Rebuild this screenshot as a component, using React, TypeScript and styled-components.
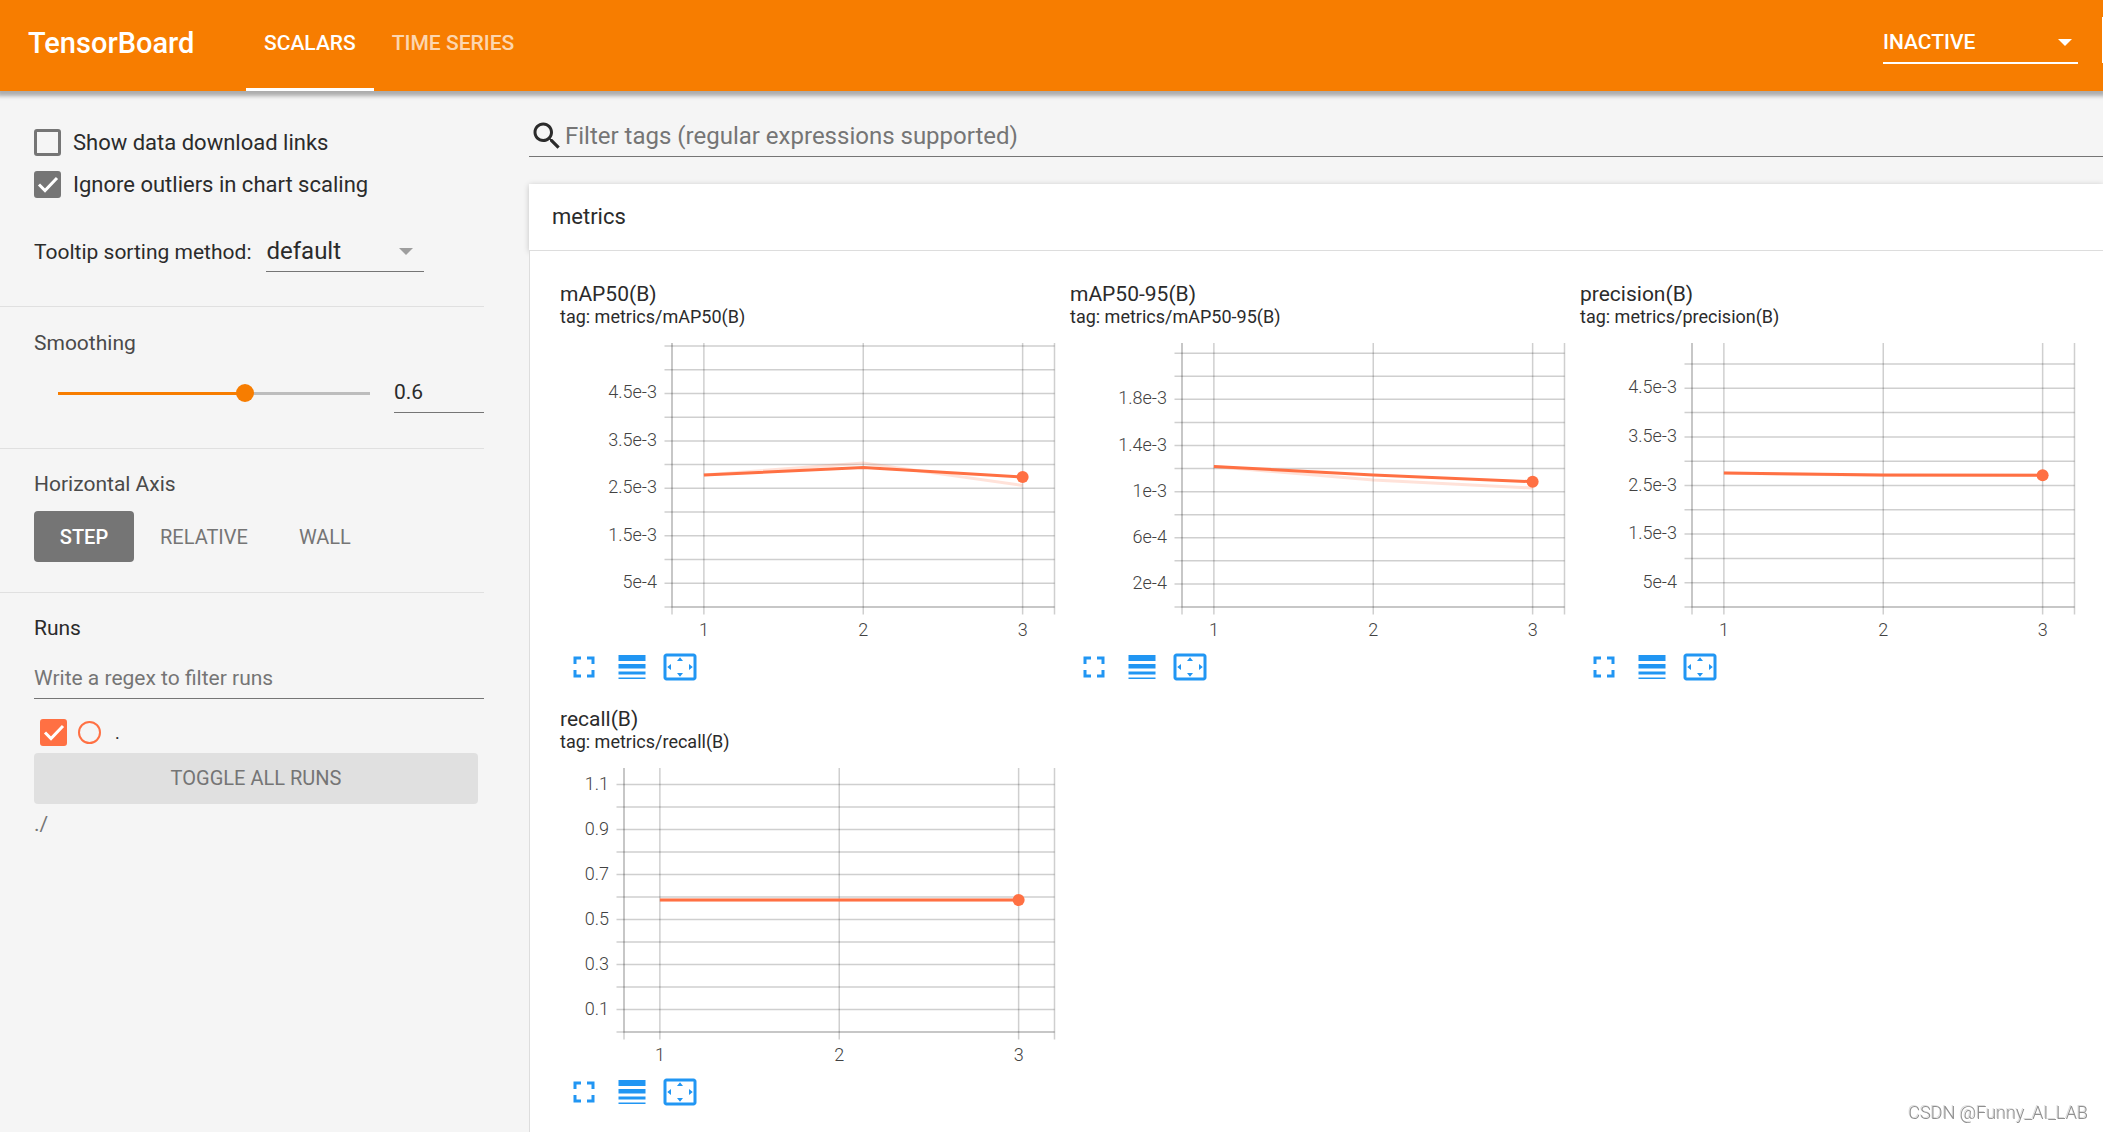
import React, { useState } from "react";
import styled, { createGlobalStyle } from "styled-components";

const GlobalStyle = createGlobalStyle`
  *, *::before, *::after { box-sizing: border-box; }
  body { margin: 0; background: #f5f5f5; }
  body, button, input, select { font-family: Roboto, "Noto Sans", sans-serif; }
`;

const orange = "#f77d00";
const grey = "#757575";
const ink = "#2b2b2b";
const runColor = "#ff7043";

const Page = styled.div`
  display: flex;
  flex-direction: column;
  min-height: 100vh;
  color: ${ink};
`;

const Header = styled.header`
  display: flex;
  align-items: center;
  height: 91px;
  padding-left: 28px;
  overflow: hidden;
  background: ${orange};
  color: #fff;
  box-shadow: 0 2px 4px 3px rgba(0, 0, 0, 0.3);
  z-index: 2;
`;

const Brand = styled.h1`
  width: 218px;
  margin: 0;
  padding-bottom: 5px;
  font-size: 29px;
  line-height: 36px;
  font-weight: 500;
`;

const Tabs = styled.nav`
  display: flex;
  align-self: stretch;
`;

const Tab = styled.button<{ $active?: boolean }>`
  padding: 0 18px 3px;
  border: 0;
  border-bottom: 3px solid ${(p) => (p.$active ? "#fff" : "transparent")};
  background: none;
  color: ${(p) => (p.$active ? "#fff" : "rgba(255, 255, 255, 0.7)")};
  font-size: 21px;
  font-weight: 500;
`;

const HeaderTools = styled.div`
  display: flex;
  align-items: center;
  gap: 24px;
  height: 46px;
  margin: 0 -45px 11px auto;
`;

const SelectBox = styled.div`
  position: relative;
  display: flex;
`;

const StatusSelect = styled.select`
  appearance: none;
  width: 195px;
  height: 47px;
  padding: 5px 24px 0 0;
  border: 0;
  border-bottom: 2px solid #fff;
  border-radius: 0;
  background: none;
  color: #fff;
  font-size: 21px;
  font-weight: 500;
`;

const ReloadButton = styled.button`
  width: 46px;
  height: 46px;
  border: 1px solid #fff;
  background: none;
`;

const Caret = styled.span<{ $light?: boolean }>`
  position: absolute;
  top: ${(p) => (p.$light ? "22px" : "12px")};
  right: ${(p) => (p.$light ? "6px" : "11px")};
  border: 7px solid transparent;
  border-top-color: ${(p) => (p.$light ? "#fff" : "#9e9e9e")};
  border-bottom: 0;
  pointer-events: none;
`;

const Body = styled.div`
  display: flex;
  flex: 1;
`;

const Sidebar = styled.aside`
  flex: 0 0 484px;
  margin-right: 45px;
`;

const Section = styled.section<{ $top: number; $bottom: number }>`
  display: flex;
  flex-direction: column;
  padding: ${(p) => p.$top}px 0 ${(p) => p.$bottom}px 34px;
  border-bottom: 1px solid #e0e0e0;
  &:last-child { border-bottom: 0; }
`;

const SectionTitle = styled.h2<{ $gap: number; $strong?: boolean }>`
  margin: 0 0 ${(p) => p.$gap}px;
  color: ${(p) => (p.$strong ? ink : "#4a4a4a")};
  font-size: 21px;
  line-height: 24px;
  font-weight: 400;
`;

const Options = styled.div`
  display: flex;
  flex-direction: column;
  gap: 15px;
  margin-bottom: 38px;
`;

const Option = styled.label`
  display: flex;
  align-items: center;
  gap: 12px;
  font-size: 22px;
  line-height: 27px;
`;

const Tick = styled.span`
  display: grid;
  width: 27px;
  height: 27px;
  > * { grid-area: 1 / 1; }
  svg { pointer-events: none; }
`;

const TickInput = styled.input<{ $color: string }>`
  appearance: none;
  width: 27px;
  height: 27px;
  margin: 0;
  border: 3px solid ${(p) => p.$color};
  border-radius: 3px;
  &:checked { background: ${(p) => p.$color}; }
`;

const SortRow = styled.div`
  display: flex;
  align-items: baseline;
  gap: 15px;
  font-size: 21px;
`;

const SortSelect = styled.select`
  appearance: none;
  width: 158px;
  height: 36px;
  padding: 0 24px 5px 0;
  border: 0;
  border-bottom: 1px solid ${grey};
  border-radius: 0;
  background: none;
  color: ${ink};
  font-size: 24px;
`;

const SmoothRow = styled.div`
  display: flex;
  align-items: center;
  gap: 15px;
  padding-left: 15px;
`;

/* The track is inset by half a thumb so the thumb is centred on the fill's end. */
const Slider = styled.input`
  appearance: none;
  flex: 1;
  min-width: 0;
  height: 18px;
  margin: 0;
  background: linear-gradient(to right, ${orange} 60%, #bdbdbd 60%) center / calc(100% - 18px) 3px no-repeat;
  &::-webkit-slider-thumb {
    appearance: none;
    width: 18px;
    height: 18px;
    border-radius: 50%;
    background: ${orange};
  }
`;

const NumberField = styled.input`
  width: 90px;
  height: 40px;
  padding: 0 0 2px;
  border: 0;
  border-bottom: 1px solid ${grey};
  background: none;
  color: ${ink};
  font-size: 21px;
`;

const AxisButtons = styled.div`
  display: flex;
  gap: 1px;
`;

const AxisButton = styled.button<{ $active?: boolean }>`
  min-width: 100px;
  height: 51px;
  padding: 0 25px;
  border: 0;
  border-radius: 4px;
  background: ${(p) => (p.$active ? grey : "none")};
  color: ${(p) => (p.$active ? "#fff" : grey)};
  font-size: 20px;
  font-weight: ${(p) => (p.$active ? 500 : 400)};
  &:last-child { min-width: 0; }
`;

const RegexField = styled.input`
  height: 41px;
  padding: 0;
  border: 0;
  border-bottom: 1px solid ${grey};
  background: none;
  font-size: 21px;
  &::placeholder { color: ${grey}; }
`;

const RunRow = styled.label`
  display: flex;
  align-items: center;
  margin: 20px 0 7px 6px;
  font-size: 18px;
  line-height: 27px;
`;

const RunDot = styled.span`
  width: 23px;
  height: 23px;
  margin: 0 14px 0 11px;
  border: 2px solid ${runColor};
  border-radius: 50%;
`;

const ToggleButton = styled.button`
  height: 51px;
  margin: 0 6px 8px 0;
  padding: 0 0 2px;
  border: 0;
  border-radius: 4px;
  background: #e0e0e0;
  color: ${grey};
  font-size: 20px;
`;

const LogDir = styled.div`
  color: ${grey};
  font-size: 21px;
  line-height: 24px;
`;

const Main = styled.main`
  display: flex;
  flex: 1;
  flex-direction: column;
  min-width: 0;
  padding-top: 27px;
`;

const Search = styled.label`
  display: flex;
  height: 39px;
  border-bottom: 1px solid ${grey};
`;

const SearchField = styled.input`
  flex: 1;
  height: 36px;
  padding: 0;
  border: 0;
  background: none;
  font-size: 24px;
  &::placeholder { color: ${grey}; }
`;

const PaneTitle = styled.button`
  height: 67px;
  margin-top: 27px;
  padding: 0 23px 2px;
  border: 0;
  border-bottom: 1px solid #ddd;
  background: #fff;
  color: ${ink};
  font-size: 22px;
  text-align: left;
  box-shadow: 0 1px 6px rgba(0, 0, 0, 0.2);
`;

const Cards = styled.div`
  display: grid;
  grid-template-columns: repeat(auto-fill, 510px);
  align-content: start;
  row-gap: 16px;
  flex: 1;
  padding: 31px 0 0 30px;
  border-left: 1px solid #ddd;
  background: #fff;
  z-index: 1;
`;

const CardTitle = styled.h3`
  margin: 0;
  font-size: 21px;
  line-height: 24px;
  font-weight: 400;
`;

const CardTag = styled.p`
  margin: 0;
  font-size: 18px;
  line-height: 22px;
`;

const Plot = styled.svg`
  display: block;
  text {
    fill: #424242;
    font-size: 18px;
    font-weight: 300;
  }
`;

const CardTools = styled.div`
  display: flex;
`;

const ToolButton = styled.button`
  display: flex;
  align-items: center;
  justify-content: center;
  width: 48px;
  height: 48px;
  padding: 0;
  border: 0;
  background: none;
  color: #2196f3;
`;

const Watermark = styled.div`
  position: fixed;
  right: 15px;
  bottom: 7px;
  color: #8f8f8f;
  font-family: Roboto, sans-serif;
  font-size: 18px;
  font-weight: 300;
  line-height: 24px;
  text-shadow: -1px -1px 0 #ddd;
  z-index: 3;
`;

function Icon({ path }: { path: string }) {
  return (
    <svg width="36" height="36" viewBox="0 0 24 24" fill="currentColor" aria-hidden="true">
      <path d={path} />
    </svg>
  );
}

const icons = {
  search:
    "M15.5 14h-.79l-.28-.27C15.41 12.59 16 11.11 16 9.5 16 5.91 13.09 3 9.5 3S3 5.91 3 9.5 5.91 16 9.5 16c1.61 0 3.09-.59 4.23-1.57l.27.28v.79l5 4.99L20.49 19l-4.99-5zm-6 0C7.01 14 5 11.99 5 9.5S7.01 5 9.5 5 14 7.01 14 9.5 11.99 14 9.5 14z",
  fullscreen:
    "M7 14H5v5h5v-2H7v-3zm-2-4h2V7h3V5H5v5zm12 7h-3v2h5v-5h-2v3zM14 5v2h3v3h2V5h-5z",
  lines:
    "M3 17h18v-2H3v2zm0 3h18v-1H3v1zm0-7h18v-3H3v3zm0-9v4h18V4H3z",
  fit:
    "M12.01 5.5L10 8h4l-1.99-2.5zM18 10v4l2.5-1.99L18 10zM6 10l-2.5 2.01L6 14v-4zm8 6h-4l2.01 2.5L14 16zm7-13H3c-1.1 0-2 .9-2 2v14c0 1.1.9 2 2 2h18c1.1 0 2-.9 2-2V5c0-1.1-.9-2-2-2zm0 16.01H3V4.99h18v14.02z",
};

function Checkbox({ color, ...rest }: { color: string; checked: boolean; onChange: () => void }) {
  return (
    <Tick>
      <TickInput type="checkbox" $color={color} {...rest} />
      {rest.checked && (
        <svg width="27" height="27" viewBox="0 0 27 27" fill="none" stroke="#fff" strokeWidth="3">
          <path d="M5 13.5L11 19.5L23 7" />
        </svg>
      )}
    </Tick>
  );
}

interface Scalar {
  name: string;
  left: number;
  step: number;
  rows: number;
  labels: string[];
  raw: number[];
  smoothed: number[];
}

const scalars: Scalar[] = [
  {
    name: "mAP50(B)", left: 112, step: 23.73, rows: 12,
    labels: ["5e-4", "1.5e-3", "2.5e-3", "3.5e-3", "4.5e-3"],
    raw: [147, 135, 157.5], smoothed: [147, 139.5, 149],
  },
  {
    name: "mAP50-95(B)", left: 112, step: 23.07, rows: 12,
    labels: ["2e-4", "6e-4", "1e-3", "1.4e-3", "1.8e-3"],
    raw: [138.5, 152, 160], smoothed: [138.5, 147, 153.7],
  },
  {
    name: "precision(B)", left: 112, step: 24.3, rows: 11,
    labels: ["5e-4", "1.5e-3", "2.5e-3", "3.5e-3", "4.5e-3"],
    raw: [145, 147.5, 147], smoothed: [145, 147, 147.3],
  },
  {
    name: "recall(B)", left: 64, step: 22.5, rows: 12,
    labels: ["0.1", "0.3", "0.5", "0.7", "0.9", "1.1"],
    raw: [147, 147, 147], smoothed: [147, 147, 147],
  },
];

const plotTop = 15;
const plotBottom = 279;
const plotRight = 494.5;

function Chart({ data }: { data: Scalar }) {
  const span = plotRight - data.left;
  const xs = [1, 6, 11].map((n) => data.left + (span * n) / 12);
  const trace = (ys: number[]) => ys.map((y, i) => `${xs[i]},${y}`).join(" ");
  return (
    <Plot width="496" height="315" role="img" aria-label={`${data.name} chart`}>
      <g stroke="#000" strokeOpacity="0.19" strokeWidth="1.5">
        {Array.from({ length: data.rows }, (_, k) => {
          const y = plotBottom - k * data.step;
          return <line key={k} x1={data.left - 7.5} x2={plotRight} y1={y} y2={y} />;
        })}
        {[data.left, ...xs, plotRight].map((x) => (
          <line key={x} x1={x} x2={x} y1={plotTop} y2={plotBottom + 7.5} />
        ))}
        <polyline points={`${data.left},${plotTop} ${data.left},${plotBottom} ${plotRight},${plotBottom}`} fill="none" strokeOpacity="0.12" />
      </g>
      {data.labels.map((label, i) => (
        <text key={label} x={data.left - 15} y={plotBottom - (i * 2 + 1) * data.step + 5} textAnchor="end">
          {label}
        </text>
      ))}
      {xs.map((x, i) => (
        <text key={x} x={x} y={plotBottom + 29} textAnchor="middle">{i + 1}</text>
      ))}
      <g fill="none" stroke={runColor} strokeWidth="3">
        <polyline points={trace(data.raw)} strokeOpacity="0.2" />
        <polyline points={trace(data.smoothed)} />
      </g>
      <circle cx={xs[2]} cy={data.smoothed[2]} r="6" fill={runColor} />
    </Plot>
  );
}

function ScalarCard({ data }: { data: Scalar }) {
  return (
    <article>
      <CardTitle>{data.name}</CardTitle>
      <CardTag>tag: metrics/{data.name}</CardTag>
      <Chart data={data} />
      <CardTools>
        <ToolButton aria-label="Toggle card size"><Icon path={icons.fullscreen} /></ToolButton>
        <ToolButton aria-label="Toggle log scale"><Icon path={icons.lines} /></ToolButton>
        <ToolButton aria-label="Fit domain to data"><Icon path={icons.fit} /></ToolButton>
      </CardTools>
    </article>
  );
}

export default function App() {
  const [links, setLinks] = useState(false);
  const [outliers, setOutliers] = useState(true);
  const [run, setRun] = useState(true);
  return (
    <Page>
      <GlobalStyle />
      <Header>
        <Brand>TensorBoard</Brand>
        <Tabs>
          <Tab $active>SCALARS</Tab>
          <Tab>TIME SERIES</Tab>
        </Tabs>
        <HeaderTools>
          <SelectBox>
            <StatusSelect aria-label="Dashboards">
              <option>INACTIVE</option>
            </StatusSelect>
            <Caret $light />
          </SelectBox>
          <ReloadButton aria-label="Upload" />
        </HeaderTools>
      </Header>
      <Body>
        <Sidebar>
          <Section $top={38} $bottom={34}>
            <Options>
              <Option>
                <Checkbox color={grey} checked={links} onChange={() => setLinks(!links)} />
                Show data download links
              </Option>
              <Option>
                <Checkbox color={grey} checked={outliers} onChange={() => setOutliers(!outliers)} />
                Ignore outliers in chart scaling
              </Option>
            </Options>
            <SortRow>
              <label htmlFor="sorting">Tooltip sorting method:</label>
              <SelectBox>
                <SortSelect id="sorting">
                  <option>default</option>
                </SortSelect>
                <Caret />
              </SelectBox>
            </SortRow>
          </Section>
          <Section $top={24} $bottom={35}>
            <SectionTitle $gap={18}>Smoothing</SectionTitle>
            <SmoothRow>
              <Slider type="range" min="0" max="1" step="0.1" defaultValue="0.6" aria-label="Smoothing" />
              <NumberField defaultValue="0.6" aria-label="Smoothing value" />
            </SmoothRow>
          </Section>
          <Section $top={23} $bottom={30}>
            <SectionTitle $gap={15}>Horizontal Axis</SectionTitle>
            <AxisButtons>
              <AxisButton $active>STEP</AxisButton>
              <AxisButton>RELATIVE</AxisButton>
              <AxisButton>WALL</AxisButton>
            </AxisButtons>
          </Section>
          <Section $top={23} $bottom={24}>
            <SectionTitle $gap={18} $strong>Runs</SectionTitle>
            <RegexField placeholder="Write a regex to filter runs" aria-label="Filter runs" />
            <RunRow>
              <Checkbox color={runColor} checked={run} onChange={() => setRun(!run)} />
              <RunDot />
              .
            </RunRow>
            <ToggleButton>TOGGLE ALL RUNS</ToggleButton>
            <LogDir>./</LogDir>
          </Section>
        </Sidebar>
        <Main>
          <Search>
            <Icon path={icons.search} />
            <SearchField placeholder="Filter tags (regular expressions supported)" aria-label="Filter tags" />
          </Search>
          <PaneTitle>metrics</PaneTitle>
          <Cards>
            {scalars.map((s) => (
              <ScalarCard key={s.name} data={s} />
            ))}
          </Cards>
        </Main>
      </Body>
      <Watermark>CSDN @Funny_AI_LAB</Watermark>
    </Page>
  );
}
